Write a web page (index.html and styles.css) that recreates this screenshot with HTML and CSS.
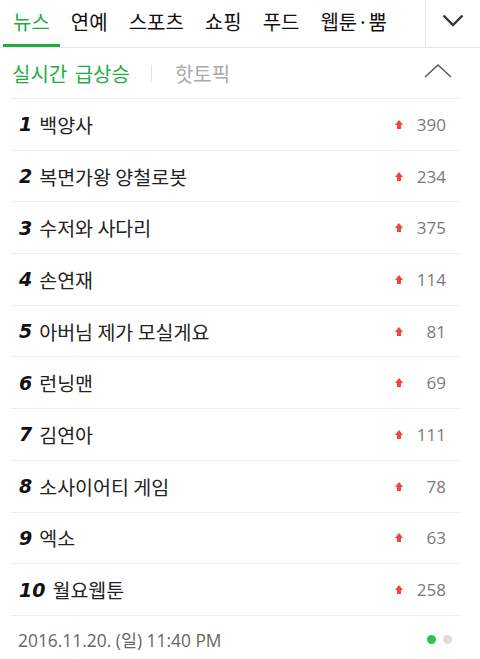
FILE: index.html
```html
<!DOCTYPE html>
<html>
<head>
	<meta name="viewport" content="width=device-width, initial-scale=1">
	<title>실시간 급상승</title>
<link rel="stylesheet" href="styles.css">
</head>
<body>

<div class="topnav">
	<div class="tabs">
		<a class="tab on">뉴스</a>
		<a class="tab">연예</a>
		<a class="tab">스포츠</a>
		<a class="tab">쇼핑</a>
		<a class="tab">푸드</a>
		<a class="tab">웹툰·뿜</a>
	</div>
	<div class="more">
		<svg width="22" height="14" viewBox="0 0 22 14"><polyline points="1.5,1.5 11,11 20.5,1.5" fill="none" stroke="#333" stroke-width="2.4"/></svg>
	</div>
</div>

<div class="subhead">
	<span class="sub on">실시간 급상승</span>
	<span class="bar"></span>
	<span class="sub">핫토픽</span>
	<span class="fold">
		<svg width="28" height="14" viewBox="0 0 28 14"><polyline points="1,13 14,1 27,13" fill="none" stroke="#555" stroke-width="1.4"/></svg>
	</span>
</div>

<ul class="rank">
	<li><em>1</em><span class="word">백양사</span><span class="up"></span><span class="cnt">390</span></li>
	<li><em>2</em><span class="word">복면가왕 양철로봇</span><span class="up"></span><span class="cnt">234</span></li>
	<li><em>3</em><span class="word">수저와 사다리</span><span class="up"></span><span class="cnt">375</span></li>
	<li><em>4</em><span class="word">손연재</span><span class="up"></span><span class="cnt">114</span></li>
	<li><em>5</em><span class="word">아버님 제가 모실게요</span><span class="up"></span><span class="cnt">81</span></li>
	<li><em>6</em><span class="word">런닝맨</span><span class="up"></span><span class="cnt">69</span></li>
	<li><em>7</em><span class="word">김연아</span><span class="up"></span><span class="cnt">111</span></li>
	<li><em>8</em><span class="word">소사이어티 게임</span><span class="up"></span><span class="cnt">78</span></li>
	<li><em>9</em><span class="word">엑소</span><span class="up"></span><span class="cnt">63</span></li>
	<li><em>10</em><span class="word">월요웹툰</span><span class="up"></span><span class="cnt">258</span></li>
</ul>

<div class="foot">
	<span class="time">2016.11.20. (일) 11:40 PM</span>
	<span class="dots"><i class="dot on"></i><i class="dot"></i></span>
</div>

</body>
</html>
```

FILE: styles.css
```css
body{
	margin: 0;
	padding: 0;
	background-color: white;
	color: #222;
	font-family: "Noto Sans CJK KR", "Noto Sans", sans-serif;
}

.topnav{
	display: flex;
	height: 47px;
	border-bottom: 1px solid #e6e6e6;
}
.tabs{
	display: flex;
	box-sizing: border-box;
	width: 425px;
	padding-left: 2.5px;
	overflow: hidden;
	white-space: nowrap;
}
.tab{
	flex-shrink: 0;
	padding: 0 10.5px;
	font-size: 20px;
	line-height: 44px;
	color: #111;
	border-bottom: 3px solid transparent;
}
.tab.on{
	color: #1fae45;
	border-bottom-color: #1fae45;
}
.more{
	flex: 1;
	display: flex;
	align-items: center;
	justify-content: center;
	border-left: 1px solid #e6e6e6;
	padding-bottom: 6px;
}

.subhead{
	display: flex;
	align-items: center;
	height: 50px;
	padding: 0 28px 0 12px;
	font-size: 20px;
	word-spacing: 3px;
}
.sub{
	color: #aaa;
}
.sub.on{
	color: #1fae45;
}
.bar{
	width: 1px;
	height: 17px;
	background-color: #e2e2e2;
	margin: 0 23px 0 21px;
}
.fold{
	margin-left: auto;
	display: flex;
	padding-bottom: 4px;
}

.rank{
	list-style: none;
	margin: 0 20px 0 10px;
	padding: 0;
	border-top: 1px solid #eee;
}
.rank li{
	display: flex;
	align-items: center;
	height: 50.7px;
	padding: 0 14px 0 9px;
	border-bottom: 1px solid #eee;
	font-size: 19.5px;
}
.rank em{
	font-family: "DejaVu Sans", sans-serif;
	font-weight: bold;
	font-style: italic;
	font-size: 19px;
	color: #111;
	margin-right: 7px;
}
.word{
	flex: 1;
	color: #222;
}
.up{
	width: 0;
	height: 0;
	border-left: 4.5px solid transparent;
	border-right: 4.5px solid transparent;
	border-bottom: 5px solid #f24444;
	position: relative;
	margin-bottom: 4px;
}
.up:after{
	content: "";
	position: absolute;
	left: -2px;
	top: 5px;
	width: 4px;
	height: 4px;
	background-color: #f24444;
}
.cnt{
	width: 32px;
	margin-left: 11px;
	text-align: right;
	font-family: "Open Sans", sans-serif;
	font-size: 17px;
	color: #7a7a7a;
}

.foot{
	display: flex;
	align-items: center;
	height: 48px;
	padding: 0 28px 0 18px;
}
.time{
	font-family: "Open Sans", "Noto Sans CJK KR", sans-serif;
	font-size: 17.4px;
	color: #666;
}
.dots{
	margin-left: auto;
	display: flex;
	gap: 7px;
}
.dot{
	width: 9px;
	height: 9px;
	border-radius: 50%;
	background-color: #ddd;
}
.dot.on{
	background-color: #22c55e;
}
```
